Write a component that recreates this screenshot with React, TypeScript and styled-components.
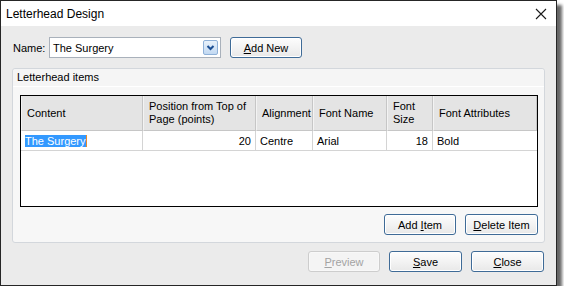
import React from 'react';
import styled, { createGlobalStyle } from 'styled-components';

const GlobalStyle = createGlobalStyle`
  html, body {
    margin: 0;
    padding: 0;
    background: #ffffff;
  }
  body {
    font-family: "Liberation Sans", Arial, sans-serif;
    font-size: 11px;
    color: #000;
  }
`;

const Window = styled.div`
  box-sizing: border-box;
  width: 557px;
  height: 286px;
  border: 1px solid #262626;
  background: #ebebeb;
  box-shadow: 5px 5px 3px rgba(0, 0, 0, 0.6);
  display: flex;
  flex-direction: column;
`;

const TitleBar = styled.div`
  height: 25px;
  background: #ffffff;
  display: flex;
  align-items: center;
  justify-content: space-between;
  padding: 0 9px 0 5px;
  font-size: 12px;
  flex-shrink: 0;
`;

const CloseIcon = styled.svg`
  width: 12px;
  height: 12px;
`;

const Body = styled.div`
  flex: 1;
  display: flex;
  flex-direction: column;
  padding: 11px 11px 0 11px;
`;

const NameRow = styled.div`
  display: flex;
  align-items: center;
  height: 21px;
`;

const Label = styled.span`
  width: 36px;
  padding-left: 1px;
`;

const Combo = styled.div`
  box-sizing: border-box;
  width: 172px;
  height: 21px;
  border: 1px solid #a9b1bb;
  background: #fff;
  display: flex;
  align-items: center;
  justify-content: space-between;
  padding: 0 2px 0 3px;
`;

const DropButton = styled.div`
  box-sizing: border-box;
  width: 15px;
  height: 15px;
  border: 1px solid #8fb1d8;
  border-radius: 2px;
  background: linear-gradient(#e9f2fb, #c2d9f2);
  display: flex;
  align-items: center;
  justify-content: center;
`;

const Button = styled.button<{ $width: number; $disabled?: boolean }>`
  box-sizing: border-box;
  width: ${p => p.$width}px;
  height: 21px;
  padding: 0;
  font: inherit;
  color: ${p => (p.$disabled ? '#a3a3a3' : '#000')};
  border: 1px solid ${p => (p.$disabled ? '#cdcdcd' : '#3f6b97')};
  border-radius: 3px;
  background: ${p =>
    p.$disabled ? '#f4f4f4' : 'linear-gradient(#fdfdfd, #f3f3f3 50%, #e8e8e8)'};
  box-shadow: inset 0 0 0 1px ${p => (p.$disabled ? '#f8f8f8' : '#ffffff')};
`;

const Key = styled.span`
  text-decoration: underline;
`;

const Group = styled.div`
  margin-top: 10px;
  box-sizing: border-box;
  width: 533px;
  height: 175px;
  border: 1px solid #d3d7dc;
  border-radius: 3px;
  background: #f7f7f7;
  display: flex;
  flex-direction: column;
`;

const GroupHeader = styled.div`
  height: 17px;
  line-height: 17px;
  padding-left: 4px;
  border-bottom: 1px solid #ffffff;
  background: #f5f5f5;
  border-radius: 3px 3px 0 0;
  flex-shrink: 0;
`;

const GroupContent = styled.div`
  padding: 8px 6px 0 7px;
  display: flex;
  flex-direction: column;
`;

const Grid = styled.div`
  box-sizing: border-box;
  width: 518px;
  height: 112px;
  border: 1px solid #000;
  background: #fff;
  display: grid;
  grid-template-columns: 122px 113px 57px 74px 46px 104px;
  grid-template-rows: 35px 20px;
  align-content: start;
`;

const HeadCell = styled.div`
  background: #e4e4e4;
  border-right: 1px solid #c6c6c6;
  border-left: 1px solid #f3f3f3;
  border-bottom: 1px solid #c6c6c6;
  display: flex;
  align-items: center;
  padding: 0 5px;
  line-height: 13px;
  &:last-child {
    border-right: none;
  }
`;

const Cell = styled.div<{ $right?: boolean }>`
  border-right: 1px solid #d4d4d4;
  border-bottom: 1px solid #d4d4d4;
  display: flex;
  align-items: center;
  justify-content: ${p => (p.$right ? 'flex-end' : 'flex-start')};
  padding: 0 4px;
  &:last-child {
    border-right: none;
  }
`;

const Selected = styled.span`
  background: #3399ff;
  color: #fff;
  border-right: 1px solid #e98a2a;
`;

const ItemButtons = styled.div`
  display: flex;
  justify-content: flex-end;
  gap: 9px;
  margin-top: 7px;
`;

const Footer = styled.div`
  display: flex;
  justify-content: flex-end;
  gap: 9px;
  margin-top: 8px;
  padding-right: 1px;
`;

const headers = [
  'Content',
  'Position from Top of Page (points)',
  'Alignment',
  'Font Name',
  'Font Size',
  'Font Attributes',
];

export default function App() {
  return (
    <>
      <GlobalStyle />
      <Window>
        <TitleBar>
          <span>Letterhead Design</span>
          <CloseIcon viewBox="0 0 12 12">
            <path d="M1 1 L11 11 M11 1 L1 11" stroke="#1a1a1a" strokeWidth="1.1" fill="none" />
          </CloseIcon>
        </TitleBar>
        <Body>
          <NameRow>
            <Label>Name:</Label>
            <Combo>
              <span>The Surgery</span>
              <DropButton>
                <svg width="9" height="6" viewBox="0 0 9 6">
                  <path d="M1.5 1 L4.5 4 L7.5 1" stroke="#1c4f94" strokeWidth="2" fill="none" />
                </svg>
              </DropButton>
            </Combo>
            <Button $width={72} style={{ marginLeft: 9 }}>
              <Key>A</Key>dd New
            </Button>
          </NameRow>
          <Group>
            <GroupHeader>Letterhead items</GroupHeader>
            <GroupContent>
              <Grid>
                {headers.map(h => (
                  <HeadCell key={h}>{h}</HeadCell>
                ))}
                <Cell>
                  <Selected>The Surgery</Selected>
                </Cell>
                <Cell $right>20</Cell>
                <Cell>Centre</Cell>
                <Cell>Arial</Cell>
                <Cell $right>18</Cell>
                <Cell>Bold</Cell>
              </Grid>
              <ItemButtons>
                <Button $width={72}>
                  Add <Key>I</Key>tem
                </Button>
                <Button $width={73}>
                  <Key>D</Key>elete Item
                </Button>
              </ItemButtons>
            </GroupContent>
          </Group>
          <Footer>
            <Button $width={72} $disabled>
              <Key>P</Key>review
            </Button>
            <Button $width={73}>
              <Key>S</Key>ave
            </Button>
            <Button $width={73}>
              <Key>C</Key>lose
            </Button>
          </Footer>
        </Body>
      </Window>
    </>
  );
}
